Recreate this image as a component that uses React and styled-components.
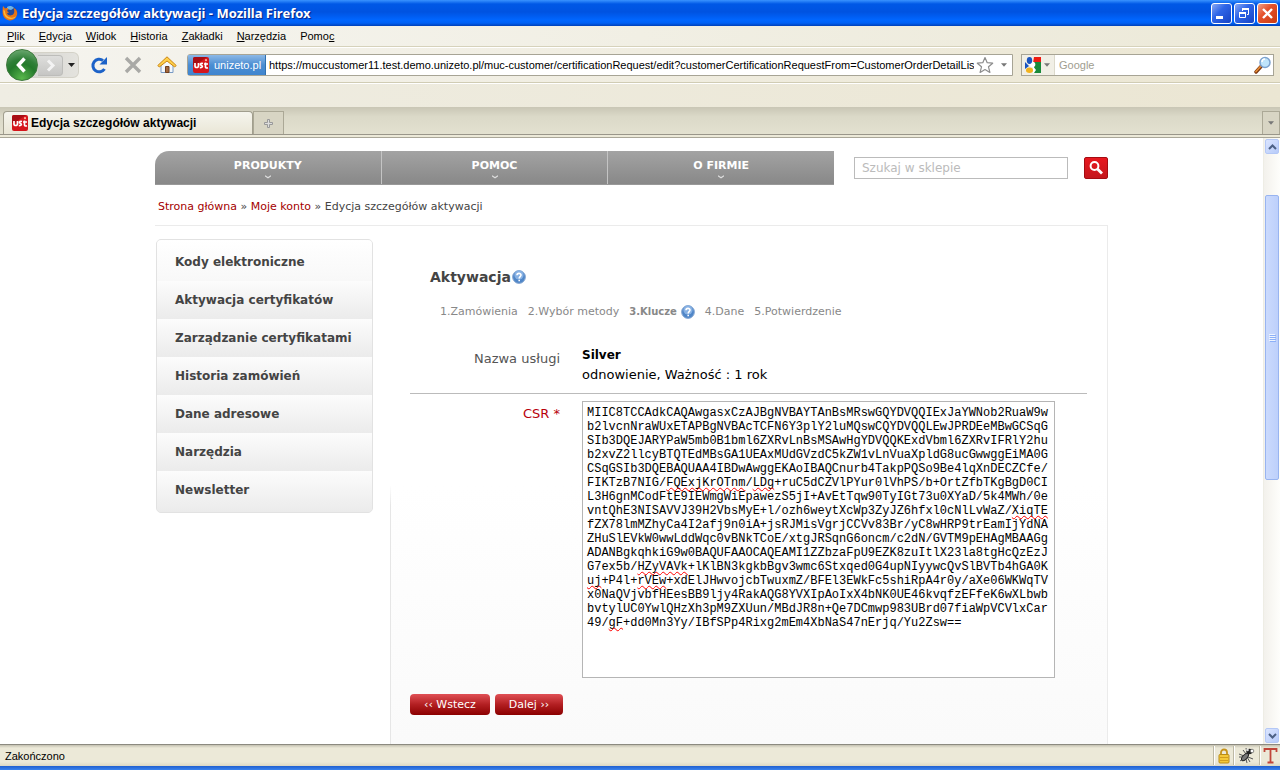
import React, { useState } from "react";
import styled, { createGlobalStyle } from "styled-components";

const GlobalStyle = createGlobalStyle`
  * {
    box-sizing: border-box;
  }
  body {
    margin: 0;
    overflow: hidden;
  }
  button, input, textarea {
    font: inherit;
    margin: 0;
  }
`;

const uiFont = '"Liberation Sans", sans-serif';
const boldUiFont = '"Noto Sans", "Liberation Sans", sans-serif';
const pageFont = '"DejaVu Sans", "Liberation Sans", sans-serif';

const Window = styled.div`
  display: flex;
  flex-direction: column;
  height: 100vh;
  font-family: ${uiFont};
  font-size: 11px;
  line-height: 14px;
  color: #000;
  background: #ece9d8;
`;

/* ---------- title bar ---------- */

const TitleBar = styled.header`
  display: flex;
  align-items: center;
  flex: none;
  height: 26px;
  padding: 0 2px;
  background: linear-gradient(#3a93ff 0, #0058e6 4px, #0053e1 12px, #0066ff 20px, #0061f5 23px, #0040b8 26px);
`;

const WindowTitle = styled.h1`
  flex: 1;
  margin: 0 0 0 4px;
  font-family: ${boldUiFont};
  font-size: 13px;
  line-height: 16px;
  font-weight: 700;
  color: #fff;
  text-shadow: 1px 1px 1px #0a1f80;
`;

const WindowButtons = styled.div`
  display: flex;
  gap: 2px;
`;

const WindowButton = styled.button`
  width: 21px;
  height: 21px;
  padding: 0;
  border: 1px solid #fff;
  border-radius: 3px;
  background: ${(props) => props.$close
    ? "linear-gradient(135deg, #f0a088 0%, #e5512b 40%, #c93b12 100%)"
    : "linear-gradient(135deg, #8aa9f3 0%, #2f66e8 40%, #1642c4 100%)"};
  svg {
    display: block;
  }
`;

/* ---------- menu and toolbars ---------- */

const MenuBar = styled.nav`
  display: flex;
  align-items: center;
  gap: 14px;
  flex: none;
  height: 21px;
  padding-left: 7px;
  border-bottom: 1px solid #d6d2bb;
  background: linear-gradient(90deg, #f6f5f0, #ece9d8);
`;

const MenuItem = styled.button`
  padding: 0;
  border: 0;
  background: none;
  color: #000;
`;

const NavBar = styled.div`
  display: flex;
  align-items: center;
  flex: none;
  height: 36px;
  padding: 0 6px;
  border-top: 1px solid #fff;
  border-bottom: 1px solid #d0ccb4;
  background: linear-gradient(90deg, #f5f4ef, #ebe6d2);
`;

const HistoryPod = styled.div`
  display: flex;
  align-items: center;
  width: 73px;
  height: 26px;
  border: 1px solid #d4d2c8;
  border-left: 0;
  border-radius: 13px 6px 6px 13px;
  background: linear-gradient(90deg, #cfcfcb, #e4e3de);
`;

const BackButton = styled.button`
  flex: none;
  width: 32px;
  height: 32px;
  padding: 0;
  border: 1px solid #3d7a3d;
  border-radius: 50%;
  background: radial-gradient(circle at 50% 95%, #59b84c 0, #23792b 45%, #2f7f38 60%, #80b783 100%);
  svg {
    display: block;
  }
`;

const ForwardButton = styled.button`
  width: 25px;
  height: 21px;
  padding: 0;
  border: 1px solid #bdbdba;
  border-left: 0;
  border-radius: 0 4px 4px 0;
  background: linear-gradient(#dededc, #c6c6c4);
  svg {
    display: block;
  }
`;

const PlainButton = styled.button`
  display: flex;
  align-items: center;
  justify-content: center;
  flex: none;
  width: ${(props) => props.$width}px;
  height: 22px;
  padding: 0;
  border: 0;
  background: none;
`;

const ToolButtons = styled.div`
  display: flex;
  gap: 14px;
  margin: 0 10px;
`;

const Field = styled.div`
  display: flex;
  align-items: center;
  height: 22px;
  border: 1px solid #a7a495;
  background: #fff;
`;

const AddressField = styled(Field)`
  flex: 1;
  min-width: 0;
  margin-right: 8px;
  border-radius: 3px 0 0 3px;
`;

const SearchField = styled(Field)`
  flex: none;
  width: 253px;
`;

const SiteIdentity = styled.button`
  display: flex;
  align-items: center;
  gap: 5px;
  flex: none;
  width: 78px;
  height: 20px;
  padding: 0 0 0 5px;
  border: 0;
  border-right: 1px solid #2f6fae;
  background: linear-gradient(#8cb8e6, #4b8dd2 50%, #3f85cf);
  color: #fff;
`;

const BareInput = styled.input`
  flex: 1;
  min-width: 0;
  height: 20px;
  padding: 0 0 0 ${(props) => props.$inset}px;
  border: 0;
  outline: 0;
  background: transparent;
  color: #000;
  &::placeholder {
    color: #a09d8f;
    opacity: 1;
  }
`;

const EngineButton = styled.button`
  display: flex;
  align-items: center;
  gap: 3px;
  width: 33px;
  height: 20px;
  padding: 0 0 0 3px;
  border: 0;
  border-right: 1px solid #dcd9cb;
  background: #f1efe6;
`;

const BookmarksBar = styled.div`
  flex: none;
  height: 24px;
  border-top: 1px solid #fff;
  background: linear-gradient(90deg, #efede3, #ebe6d3);
`;

const TabStrip = styled.div`
  display: flex;
  align-items: flex-end;
  flex: none;
  height: 28px;
  padding-left: 3px;
  border-bottom: 1px solid #99968a;
  background: linear-gradient(#c9c6b5, #dbd9c8 35%, #e3e1d0);
`;

const Tab = styled.button`
  display: flex;
  align-items: center;
  gap: 3px;
  width: 250px;
  height: 23px;
  padding: 0 8px;
  border: 1px solid #a19e8e;
  border-bottom: 0;
  border-radius: 4px 4px 0 0;
  background: linear-gradient(#f6f5ee, #e9e6d6);
  font-size: 12px;
  font-weight: 700;
  white-space: nowrap;
`;

const StripButton = styled.button`
  display: flex;
  align-items: center;
  justify-content: center;
  width: ${(props) => props.$width}px;
  height: 23px;
  padding: 0;
  border: 1px solid #aba896;
  border-bottom: 0;
  background: #d8d5c4;
`;

const StripSpacer = styled.div`
  flex: 1;
`;

const StripEdge = styled.div`
  flex: none;
  height: 3px;
  border-bottom: 1px solid #aaa799;
  background: #ece9d8;
`;

/* ---------- viewport ---------- */

const Viewport = styled.div`
  display: flex;
  flex: 1;
  min-height: 0;
`;

const Page = styled.div`
  display: flex;
  flex-direction: column;
  flex: 1;
  min-width: 0;
  overflow: hidden;
  padding-top: 13px;
  background: #fff;
  font-family: ${pageFont};
  color: #444;
`;

const Container = styled.div`
  display: flex;
  flex-direction: column;
  flex: 1;
  width: 100%;
  max-width: 953px;
  min-height: 0;
  margin: 0 auto;
`;

const TopRow = styled.div`
  display: flex;
  align-items: center;
  flex: none;
`;

const MainNav = styled.nav`
  display: flex;
  flex: 1;
  overflow: hidden;
  border-radius: 14px 0 0 0;
  border-bottom: 1px solid #999;
`;

const NavEntry = styled.a`
  display: flex;
  flex-direction: column;
  align-items: center;
  flex: 1;
  height: 33px;
  padding-top: 8px;
  border-left: 1px solid #c4c4c4;
  background: linear-gradient(#a3a3a3, #888);
  color: #fff;
  font-weight: 700;
  text-decoration: none;
  &:first-child {
    border-left: 0;
  }
  svg {
    flex: none;
    margin-top: 2px;
  }
`;

const ShopSearch = styled.form`
  display: flex;
  gap: 16px;
  margin-left: 20px;
`;

const ShopInput = styled.input`
  width: 214px;
  height: 22px;
  padding: 0 7px;
  border: 1px solid #bbb;
  outline: 0;
  background: #fff;
  font-size: 12px;
  &::placeholder {
    color: #bbb;
    opacity: 1;
  }
`;

const ShopButton = styled.button`
  width: 24px;
  height: 22px;
  padding: 0;
  border: 1px solid #a40c12;
  border-radius: 2px;
  background: linear-gradient(#e8181f, #c4161c);
  svg {
    display: block;
  }
`;

const Breadcrumb = styled.nav`
  flex: none;
  padding: 15px 3px 11px;
  white-space: nowrap;
`;

const Crumb = styled.a`
  color: #a40000;
  text-decoration: none;
`;

const Columns = styled.div`
  display: flex;
  gap: 17px;
  flex: 1;
  min-height: 0;
  border-top: 1px solid #ebebeb;
  border-right: 1px solid #ebebeb;
`;

const SideMenu = styled.nav`
  flex: none;
  align-self: flex-start;
  width: 217px;
  margin: 13px 0 0 1px;
  overflow: hidden;
  border: 1px solid #e2e2e2;
  border-radius: 5px;
  background: #ebebeb;
`;

const SideLink = styled.a`
  display: block;
  height: 38px;
  padding: 10px 18px 0;
  background: linear-gradient(#fcfcfc, #ebebeb);
  color: #444;
  font-size: 12px;
  line-height: 18px;
  font-weight: 700;
  text-decoration: none;
  white-space: nowrap;
  &:first-child {
    height: 41px;
    padding-top: 13px;
    background: linear-gradient(#fff, #f8f8f8);
  }
  &:last-child {
    height: 41px;
  }
`;

const Main = styled.main`
  flex: 1;
  min-width: 0;
  padding: 39px 20px 0 19px;
  border-left: 1px solid;
  border-image: linear-gradient(#fff 50%, #e6e6e6 54%) 1;
  background: linear-gradient(#fff 50%, #fafafa 100%);
`;

const Heading = styled.h2`
  display: flex;
  align-items: center;
  gap: 1px;
  margin: 0 0 13px 20px;
  font-size: 14px;
  line-height: 24px;
  font-weight: 700;
`;

const Steps = styled.ol`
  display: flex;
  align-items: center;
  gap: 10px;
  margin: 0 0 24px;
  padding: 0 0 0 30px;
  list-style: none;
  line-height: 20px;
  color: #888;
  white-space: nowrap;
`;

const Step = styled.li`
  display: flex;
  align-items: center;
  gap: 4px;
  font-size: ${(props) => (props.$current ? 10 : 11)}px;
  font-weight: ${(props) => (props.$current ? 700 : 400)};
`;

const FormRow = styled.div`
  display: flex;
  align-items: flex-start;
  gap: 22px;
  font-size: 13px;
  line-height: 19px;
`;

const ServiceRow = styled(FormRow)`
  padding-bottom: 9px;
  border-bottom: 1px solid #bbb;
`;

const CsrRow = styled(FormRow)`
  padding-top: 7px;
`;

const Caption = styled.span`
  flex: none;
  width: 150px;
  padding-top: 3px;
  text-align: right;
  color: #555;
`;

const RequiredCaption = styled.label`
  flex: none;
  width: 150px;
  padding-top: 3px;
  text-align: right;
  color: #b8000b;
`;

const ServiceValue = styled.div`
  color: #000;
`;

const ServiceName = styled.div`
  font-size: 12px;
  font-weight: 700;
`;

const CsrBox = styled.div`
  position: relative;
  width: 473px;
  height: 277px;
  font-family: "Liberation Mono", monospace;
  font-size: 12px;
  line-height: 14px;
`;

const CsrInput = styled.textarea`
  display: block;
  width: 100%;
  height: 100%;
  padding: 4px;
  border: 1px solid #b5b5b5;
  outline: 0;
  resize: none;
  overflow: hidden;
  white-space: pre;
  background: #fff;
  color: #000;
`;

const SpellLayer = styled.div`
  position: absolute;
  inset: 0;
  padding: 5px;
  white-space: pre;
  pointer-events: none;
`;

const SpellLine = styled.div`
  height: 14px;
`;

const Misspelled = styled.span`
  text-decoration: underline wavy #f00 1px;
  text-underline-offset: 1px;
  text-decoration-skip-ink: none;
`;

const Actions = styled.div`
  display: flex;
  gap: 5px;
  margin-top: 16px;
`;

const ActionButton = styled.button`
  height: 21px;
  padding: 0 14px;
  border: 0;
  border-radius: 4px;
  background: linear-gradient(#e05055, #b31f22 50%, #8b0000);
  color: #fff;
`;

/* ---------- scroll bar and status bar ---------- */

const ScrollTrack = styled.div`
  display: flex;
  flex-direction: column;
  flex: none;
  width: 17px;
  padding: 1px;
  border-left: 1px solid #eeede5;
  background: linear-gradient(90deg, #f3f1ec, #fefefb);
`;

const ScrollButton = styled.button`
  display: flex;
  align-items: center;
  justify-content: center;
  flex: none;
  height: 15px;
  padding: 0;
  border: 1px solid #b4c8f6;
  border-radius: 2px;
  background: linear-gradient(135deg, #dbe5ff, #b7cbf9);
`;

const ScrollThumb = styled.div`
  display: flex;
  align-items: center;
  justify-content: center;
  height: 285px;
  margin-top: 41px;
  border: 1px solid #98b4f0;
  border-radius: 2px;
  background: linear-gradient(90deg, #cbdafd, #bdd0fb);
`;

const ScrollGap = styled.div`
  flex: 1;
`;

const StatusBar = styled.footer`
  display: flex;
  align-items: center;
  flex: none;
  height: 22px;
  padding-left: 5px;
  border-top: 1px solid #8c8a80;
  background: linear-gradient(#c4c1b1, #ece9d8 3px, #ece9d8 17px, #dcd8c4);
`;

const StatusText = styled.span`
  flex: 1;
`;

const StatusIcon = styled.span`
  display: flex;
  align-items: center;
  justify-content: center;
  width: ${(props) => props.$width}px;
  height: 19px;
  border-left: 1px solid #bdb9a5;
  box-shadow: inset 1px 0 #fff;
`;

const TaskbarEdge = styled.div`
  flex: none;
  height: 4px;
  background: linear-gradient(#1f5fd0, #3a83ee);
`;

/* ---------- icons ---------- */

const FirefoxIcon = () => (
  <svg width="16" height="16" viewBox="0 0 16 16" aria-hidden="true">
    <circle cx="8.5" cy="7" r="6" fill="#234a9c" />
    <path d="M5 2c2-1.500 5-1.500 7 1l-3 2-4-1z" fill="#6db5e8" />
    <path d="M1 1l2 2.500c1-.8 2.500-.8 3.500.2L5 6l2 1.500-2 .8c1 2.700 4.500 3 6.500.8 1.200-1.500 1-4 0-6 3 1 4.300 4 3.500 7-1 3.500-4 5.500-7 5.400C4 15.300 1 12 .7 8.500.5 6 .6 3 1 1z" fill="#e87516" />
    <path d="M1.500 4.500C1 9 3 13 8 14c3 .4 5-1 6.500-3-2 1.500-4 2-6 1.500C5 12 3 9 3 6z" fill="#fbb83a" />
  </svg>
);

const MinimizeIcon = () => (
  <svg width="19" height="19" viewBox="0 0 19 19" aria-hidden="true">
    <path d="M4 12h7v3H4z" fill="#fff" />
  </svg>
);

const RestoreIcon = () => (
  <svg width="19" height="19" viewBox="0 0 19 19" fill="none" stroke="#fff" aria-hidden="true">
    <path d="M7.500 7V4.500h6v6H12" />
    <path d="M7 5h7" strokeWidth="2" />
    <path d="M4.500 8.500h6v5h-6z" />
    <path d="M4 9h7" strokeWidth="2" />
  </svg>
);

const CloseIcon = () => (
  <svg width="19" height="19" viewBox="0 0 19 19" aria-hidden="true">
    <path d="M5 5l9 9M14 5l-9 9" stroke="#fff" strokeWidth="2.400" />
  </svg>
);

const BackIcon = () => (
  <svg width="30" height="30" viewBox="0 0 30 30" aria-hidden="true">
    <path d="M17.500 8.500L11.500 15l6 6.500" fill="none" stroke="#fff" strokeWidth="3.500" />
  </svg>
);

const ForwardIcon = () => (
  <svg width="24" height="19" viewBox="0 0 24 19" aria-hidden="true">
    <path d="M10 4.500l5 5-5 5" fill="none" stroke="#f3f3f3" strokeWidth="3" />
  </svg>
);

const DownArrow = ({ color = "#222", width = 7 }) => (
  <svg width={width} height="4" viewBox="0 0 7 4" aria-hidden="true">
    <path d="M0 0h7L3.500 4z" fill={color} />
  </svg>
);

const ReloadIcon = () => (
  <svg width="18" height="18" viewBox="0 0 18 18" aria-hidden="true">
    <path d="M14.500 13A6.300 6.300 0 1 1 13 4.500" fill="none" stroke="#1c62c8" strokeWidth="3" />
    <path d="M17 1v7.500H9.500z" fill="#1c62c8" />
  </svg>
);

const StopIcon = () => (
  <svg width="18" height="18" viewBox="0 0 18 18" aria-hidden="true">
    <path d="M2 2l14 14M16 2L2 16" stroke="#a9a9a6" strokeWidth="3.400" />
  </svg>
);

const HomeIcon = () => (
  <svg width="20" height="18" viewBox="0 0 20 18" aria-hidden="true">
    <path d="M4 9v7.500h12V9l-6-6z" fill="#f3f7fc" stroke="#789ac4" />
    <path d="M8.500 10.500h3.500v6H8.500z" fill="#a5683d" stroke="#6f4020" />
    <path d="M10 .8L.8 9.500l1.500 1.500L10 5l7.700 6 1.500-1.500z" fill="#ffd04a" stroke="#c98413" />
  </svg>
);

const SiteIcon = () => (
  <svg width="16" height="16" viewBox="0 0 16 16" aria-hidden="true">
    <rect width="16" height="16" rx="2" fill="#d5161c" />
    <path d="M0 2a2 2 0 0 1 2-2h12L2 8H0z" fill="#a80d14" />
    <path d="M2 6v3c0 2 3.500 2 3.500 0V6M10 6.500c-3-.5-3 1.500-1.500 2s1 2.500-1.700 2M12.500 5.500v4.500c0 1 1 1.200 2.500.8M11 7h4" fill="none" stroke="#fff" strokeWidth="1.700" />
    <circle cx="13" cy="3.200" r="1.100" fill="#ffb0a0" />
  </svg>
);

const StarIcon = () => (
  <svg width="18" height="18" viewBox="0 0 18 18" aria-hidden="true">
    <path d="M9 1.500l2.200 5.200 5.500.5-4.200 3.600 1.400 5.600L9 13.500l-4.900 2.900 1.400-5.600L1.300 7.200l5.500-.5z" fill="#fff" stroke="#8d8d8d" strokeWidth="1.200" strokeLinejoin="round" />
  </svg>
);

const EngineIcon = () => (
  <svg width="16" height="16" viewBox="0 0 16 16" aria-hidden="true">
    <path d="M9 0h7v6H8z" fill="#ee1c12" />
    <path d="M9 5h7v11H9z" fill="#198a3a" />
    <path d="M0 5l4 4-4 3z" fill="#1a54c0" />
    <circle cx="7.500" cy="7.500" r="2.800" fill="#fff" />
    <ellipse cx="4.500" cy="3.500" rx="2.700" ry="3.400" fill="#1a54c0" />
    <ellipse cx="4.500" cy="13.300" rx="3.500" ry="2.700" fill="#f2b21d" />
    <path d="M8 9l3 4-2 3H8z" fill="#fff" />
  </svg>
);

const MagnifierIcon = () => (
  <svg width="18" height="18" viewBox="0 0 18 18" aria-hidden="true">
    <path d="M7 10.500L2 16" stroke="#7a3510" strokeWidth="3.400" strokeLinecap="round" />
    <path d="M6.500 10.500L2 15.500" stroke="#e58b35" strokeWidth="1.800" strokeLinecap="round" />
    <circle cx="11" cy="6.500" r="5" fill="#bfe4fb" stroke="#7ca2cf" strokeWidth="1.500" />
    <path d="M8 6a3 3 0 0 1 3-3" stroke="#fff" strokeWidth="1.500" fill="none" />
  </svg>
);

const PlusIcon = () => (
  <svg width="9" height="9" viewBox="0 0 9 9" aria-hidden="true">
    <path d="M3.500.5h2v3h3v2h-3v3h-2v-3h-3v-2h3z" fill="#ddd" stroke="#999" />
  </svg>
);

const NavMark = () => (
  <svg width="6" height="4" viewBox="0 0 6 4" aria-hidden="true">
    <path d="M0 .8l3 2 3-2" fill="none" stroke="#ddd" strokeWidth="1.300" />
  </svg>
);

const ShopSearchIcon = () => (
  <svg width="22" height="20" viewBox="0 0 22 20" aria-hidden="true">
    <circle cx="9.500" cy="8" r="3.900" fill="none" stroke="#fff" strokeWidth="2" />
    <path d="M12.500 11l4.500 4.500" stroke="#fff" strokeWidth="2.800" />
  </svg>
);

const HelpIcon = () => (
  <svg width="14" height="14" viewBox="0 0 14 14" role="img" aria-label="Pomoc">
    <circle cx="7" cy="7" r="6.400" fill="#4f86c8" stroke="#89a9d2" />
    <circle cx="7" cy="5" r="4.600" fill="#87b1e3" />
    <path d="M5 5.300c0-2.600 4-2.500 4-.2C9 6.600 7.200 6.700 7.200 8.400M7.200 9.800v1.500" fill="none" stroke="#fff" strokeWidth="1.600" />
  </svg>
);

const Chevron = ({ down }) => (
  <svg width="9" height="6" viewBox="0 0 9 6" aria-hidden="true">
    <path d={down ? "M1 1l3.500 3.500L8 1" : "M1 5l3.500-3.500L8 5"} fill="none" stroke="#4d6185" strokeWidth="2" />
  </svg>
);

const Grip = () => (
  <svg width="7" height="8" viewBox="0 0 7 8" aria-hidden="true">
    <path d="M0 .5h6M0 2.500h6M0 4.500h6M0 6.500h6" stroke="#eef4fe" />
    <path d="M1 1.500h6M1 3.500h6M1 5.500h6M1 7.500h6" stroke="#8cb0f8" />
  </svg>
);

const LockIcon = () => (
  <svg width="12" height="16" viewBox="0 0 12 16" aria-hidden="true">
    <path d="M3 7V4.500a3 3 0 0 1 6 0V7" fill="none" stroke="#c6931c" strokeWidth="1.800" />
    <rect x="1" y="6.500" width="10" height="8.500" rx="1" fill="#f4c838" stroke="#b98b16" />
    <path d="M2 9.500h8M2 12.500h8" stroke="#d29e1d" />
  </svg>
);

const BugIcon = () => (
  <svg width="17" height="17" viewBox="0 0 17 17" aria-hidden="true">
    <path d="M1 7l5 2M5 3l3 4M2 14l4-3M9 16l-1-4M15 12l-5-2M8 1l1 5M1 10h6M12 15l-3-5" stroke="#555" />
    <ellipse cx="7" cy="10" rx="2.200" ry="4.500" fill="#777" stroke="#222" transform="rotate(42 7 10)" />
    <circle cx="11.500" cy="4.500" r="2.800" fill="#222" />
    <circle cx="14" cy="4" r="1.800" fill="#fff" stroke="#444" strokeWidth=".6" />
    <circle cx="9.500" cy="3" r="1.300" fill="#ddd" />
  </svg>
);

const TypeToolIcon = () => (
  <svg width="15" height="17" viewBox="0 0 15 17" aria-hidden="true">
    <path d="M1.500 5V2h12v3M7.500 2v13M4.500 15.500h6" fill="none" stroke="#c0453a" strokeWidth="1.800" />
  </svg>
);

/* ---------- data ---------- */

const menuItems = ["Plik", "Edycja", "Widok", "Historia", "Zakładki", "Narzędzia", "Pomoc"];

const navEntries = ["PRODUKTY", "POMOC", "O FIRMIE"];

const sideLinks = [
  "Kody elektroniczne",
  "Aktywacja certyfikatów",
  "Zarządzanie certyfikatami",
  "Historia zamówień",
  "Dane adresowe",
  "Narzędzia",
  "Newsletter",
];

const steps = ["1.Zamówienia", "2.Wybór metody", "3.Klucze", "4.Dane", "5.Potwierdzenie"];

const csrLines = [
  "MIIC8TCCAdkCAQAwgasxCzAJBgNVBAYTAnBsMRswGQYDVQQIExJaYWNob2RuaW9w",
  "b2lvcnNraWUxETAPBgNVBAcTCFN6Y3plY2luMQswCQYDVQQLEwJPRDEeMBwGCSqG",
  "SIb3DQEJARYPaW5mb0B1bml6ZXRvLnBsMSAwHgYDVQQKExdVbml6ZXRvIFRlY2hu",
  "b2xvZ2llcyBTQTEdMBsGA1UEAxMUdGVzdC5kZW1vLnVuaXpldG8ucGwwggEiMA0G",
  "CSqGSIb3DQEBAQUAA4IBDwAwggEKAoIBAQCnurb4TakpPQSo9Be4lqXnDECZCfe/",
  "FIKTzB7NIG/FQExjKrOTnm/LDg+ruC5dCZVlPYur0lVhPS/b+OrtZfbTKgBgD0CI",
  "L3H6gnMCodFtE9IEWmgWiEpawezS5jI+AvEtTqw90TyIGt73u0XYaD/5k4MWh/0e",
  "vntQhE3NISAVVJ39H2VbsMyE+l/ozh6weytXcWp3ZyJZ6hfxl0cNlLvWaZ/XiqTE",
  "fZX78lmMZhyCa4I2afj9n0iA+jsRJMisVgrjCCVv83Br/yC8wHRP9trEamIjYdNA",
  "ZHuSlEVkW0wwLddWqc0vBNkTCoE/xtgJRSqnG6oncm/c2dN/GVTM9pEHAgMBAAGg",
  "ADANBgkqhkiG9w0BAQUFAAOCAQEAMI1ZZbzaFpU9EZK8zuItlX23la8tgHcQzEzJ",
  "G7ex5b/HZyVAVk+lKlBN3kgkbBgv3wmc6Stxqed0G4upNIyywcQvSlBVTb4hGA0K",
  "uj+P4l+rVEw+xdElJHwvojcbTwuxmZ/BFEl3EWkFc5shiRpA4r0y/aXe06WKWqTV",
  "x0NaQVjvbfHEesBB9ljy4RakAQG8YVXIpAoIxX4bNK0UE46kvqfzEFfeK6wXLbwb",
  "bvtylUC0YwlQHzXh3pM9ZXUun/MBdJR8n+Qe7DCmwp983UBrd07fiaWpVCVlxCar",
  "49/gF+dd0Mn3Yy/IBfSPp4Rixg2mEm4XbNaS47nErjq/Yu2Zsw==",
];

const misspelledWords = /(FQExjKrOTnm|LDg|XiqTE|HZyVAVk|uj(?=\+P4)|rVEw|gF(?=\+dd))/;

const blank = (text) => "\u00a0".repeat(text.length);

const CsrEditor = () => {
  const [csr, setCsr] = useState(csrLines.join("\n"));
  return (
    <CsrBox>
      <CsrInput id="csr" value={csr} spellCheck={false} onChange={(e) => setCsr(e.target.value)} />
      <SpellLayer aria-hidden="true">
        {csr.split("\n").map((line, i) => (
          <SpellLine key={i}>
            {line.split(misspelledWords).map((part, j) =>
              j % 2 ? <Misspelled key={j}>{blank(part)}</Misspelled> : blank(part)
            )}
          </SpellLine>
        ))}
      </SpellLayer>
    </CsrBox>
  );
};

const App = () => {
  return (
    <Window>
      <GlobalStyle />
      <TitleBar>
        <FirefoxIcon />
        <WindowTitle>Edycja szczegółów aktywacji - Mozilla Firefox</WindowTitle>
        <WindowButtons>
          <WindowButton aria-label="Minimalizuj"><MinimizeIcon /></WindowButton>
          <WindowButton aria-label="Przywróć"><RestoreIcon /></WindowButton>
          <WindowButton $close aria-label="Zamknij"><CloseIcon /></WindowButton>
        </WindowButtons>
      </TitleBar>
      <MenuBar>
        {menuItems.map((item) => (
          <MenuItem key={item}>
            {item === "Pomoc" ? <>Pomo<u>c</u></> : <><u>{item[0]}</u>{item.slice(1)}</>}
          </MenuItem>
        ))}
      </MenuBar>
      <NavBar>
        <HistoryPod>
          <BackButton aria-label="Wstecz"><BackIcon /></BackButton>
          <ForwardButton aria-label="Do przodu"><ForwardIcon /></ForwardButton>
          <PlainButton $width={16} aria-label="Ostatnie strony"><DownArrow /></PlainButton>
        </HistoryPod>
        <ToolButtons>
          <PlainButton $width={20} aria-label="Odśwież"><ReloadIcon /></PlainButton>
          <PlainButton $width={20} aria-label="Zatrzymaj"><StopIcon /></PlainButton>
          <PlainButton $width={20} aria-label="Strona startowa"><HomeIcon /></PlainButton>
        </ToolButtons>
        <AddressField>
          <SiteIdentity><SiteIcon />unizeto.pl</SiteIdentity>
          <BareInput
            $inset={3}
            aria-label="Adres"
            defaultValue="https://muccustomer11.test.demo.unizeto.pl/muc-customer/certificationRequest/edit?customerCertificationRequestFrom=CustomerOrderDetailLis"
          />
          <PlainButton $width={22} aria-label="Dodaj zakładkę"><StarIcon /></PlainButton>
          <PlainButton $width={16} aria-label="Pokaż historię"><DownArrow color="#777" width={6} /></PlainButton>
        </AddressField>
        <SearchField>
          <EngineButton aria-label="Wyszukiwarka"><EngineIcon /><DownArrow color="#777" width={6} /></EngineButton>
          <BareInput $inset={4} aria-label="Szukaj" placeholder="Google" />
          <PlainButton $width={20} aria-label="Wyszukaj"><MagnifierIcon /></PlainButton>
        </SearchField>
      </NavBar>
      <BookmarksBar />
      <TabStrip>
        <Tab><SiteIcon />Edycja szczegółów aktywacji</Tab>
        <StripButton $width={31} aria-label="Nowa karta"><PlusIcon /></StripButton>
        <StripSpacer />
        <StripButton $width={18} aria-label="Lista kart"><DownArrow color="#777" width={6} /></StripButton>
      </TabStrip>
      <StripEdge />
      <Viewport>
        <Page>
          <Container>
            <TopRow>
              <MainNav>
                {navEntries.map((entry) => (
                  <NavEntry key={entry} href="#">{entry}<NavMark /></NavEntry>
                ))}
              </MainNav>
              <ShopSearch>
                <ShopInput aria-label="Szukaj w sklepie" placeholder="Szukaj w sklepie" />
                <ShopButton type="button" aria-label="Szukaj"><ShopSearchIcon /></ShopButton>
              </ShopSearch>
            </TopRow>
            <Breadcrumb>
              <Crumb href="#">Strona główna</Crumb> » <Crumb href="#">Moje konto</Crumb> » Edycja szczegółów aktywacji
            </Breadcrumb>
            <Columns>
              <SideMenu>
                {sideLinks.map((link) => (
                  <SideLink key={link} href="#">{link}</SideLink>
                ))}
              </SideMenu>
              <Main>
                <Heading>Aktywacja<HelpIcon /></Heading>
                <Steps>
                  {steps.map((step, i) => (
                    <Step key={step} $current={i === 2}>{step}{i === 2 && <HelpIcon />}</Step>
                  ))}
                </Steps>
                <ServiceRow>
                  <Caption>Nazwa usługi</Caption>
                  <ServiceValue>
                    <ServiceName>Silver</ServiceName>
                    odnowienie, Ważność : 1 rok
                  </ServiceValue>
                </ServiceRow>
                <CsrRow>
                  <RequiredCaption htmlFor="csr">CSR *</RequiredCaption>
                  <CsrEditor />
                </CsrRow>
                <Actions>
                  <ActionButton>‹‹ Wstecz</ActionButton>
                  <ActionButton>Dalej ››</ActionButton>
                </Actions>
              </Main>
            </Columns>
          </Container>
        </Page>
        <ScrollTrack>
          <ScrollButton aria-label="W górę"><Chevron /></ScrollButton>
          <ScrollThumb><Grip /></ScrollThumb>
          <ScrollGap />
          <ScrollButton aria-label="W dół"><Chevron down /></ScrollButton>
        </ScrollTrack>
      </Viewport>
      <StatusBar>
        <StatusText>Zakończono</StatusText>
        <StatusIcon $width={20}><LockIcon /></StatusIcon>
        <StatusIcon $width={26}><BugIcon /></StatusIcon>
        <StatusIcon $width={21}><TypeToolIcon /></StatusIcon>
      </StatusBar>
      <TaskbarEdge />
    </Window>
  );
};

export default App;
